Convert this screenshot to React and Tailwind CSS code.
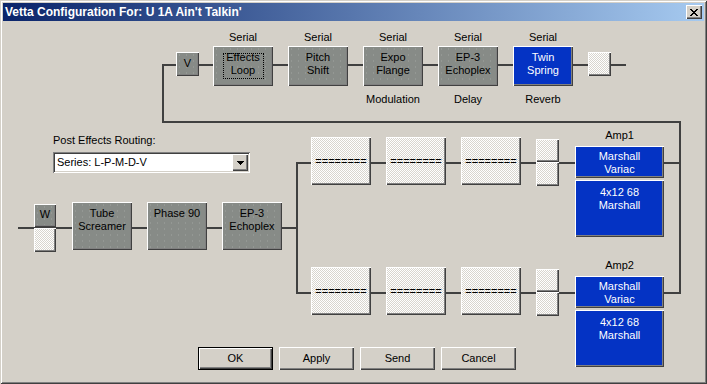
import React from "react";

const raised =
  "shadow-[inset_1px_1px_#ffffff,inset_-1px_-1px_#404040,inset_-2px_-2px_#808080]";
const btnRaised =
  "shadow-[inset_1px_1px_#ffffff,inset_-1px_-1px_#404040,inset_-2px_-2px_#808080,inset_2px_2px_#d4d0c8]";
const dots =
  "bg-[repeating-conic-gradient(#ffffff_0_25%,#d8d5ce_0_50%)] bg-[length:2px_2px]";

function Box({ pos, children, kind = "gray", focus = false }) {
  const color =
    kind === "blue"
      ? "bg-[#0433c4] text-white"
      : kind === "empty"
      ? `${dots} text-black justify-center`
      : "bg-[#878b87] bg-[radial-gradient(circle,#949894_0.6px,transparent_0.8px)] bg-[length:7px_6px] text-black";
  return (
    <div
      className={`absolute flex flex-col items-center text-center text-[11px] leading-[13px] ${raised} ${color} ${pos}`}
    >
      {children}
      {focus && (
        <div className="absolute left-[10px] top-[7px] w-[41px] h-[26px] border border-dotted border-black" />
      )}
    </div>
  );
}

function Wire({ pos }) {
  return <div className={`absolute bg-[#404040] ${pos}`} />;
}

function Label({ pos, children }) {
  return (
    <div className={`absolute text-[11px] leading-[13px] text-black text-center ${pos}`}>
      {children}
    </div>
  );
}

function Button({ children, def }) {
  return (
    <div
      className={`w-[75px] h-[23px] flex items-center justify-center text-[11px] text-black bg-[#d4d0c8] ${
        def
          ? "shadow-[inset_0_0_0_1px_#000000,inset_2px_2px_#ffffff,inset_-2px_-2px_#404040,inset_-3px_-3px_#808080]"
          : btnRaised
      }`}
    >
      {children}
    </div>
  );
}

export default function App() {
  return (
    <div className="w-[707px] h-[384px] bg-[#d4d0c8] font-['Liberation_Sans',Arial,sans-serif] p-[3px] flex flex-col shadow-[inset_1px_1px_#d4d0c8,inset_-1px_-1px_#404040,inset_2px_2px_#ffffff,inset_-2px_-2px_#808080]">
      {/* Title bar */}
      <div className="h-[18px] flex items-center justify-between pl-[2px] pr-[2px] bg-[linear-gradient(90deg,#0a246a,#a6caf0)]">
        <span className="text-white font-bold text-[12px] leading-[14px]">
          Vetta Configuration For: U 1A Ain't Talkin'
        </span>
        <div className={`w-[16px] h-[14px] bg-[#d4d0c8] flex items-center justify-center ${btnRaised}`}>
          <svg width="8" height="7" viewBox="0 0 8 7" shapeRendering="crispEdges">
            <path
              d="M0 0h2v1h-2zM6 0h2v1h-2zM1 1h2v1h-2zM5 1h2v1h-2zM2 2h4v1h-4zM3 3h2v1h-2zM2 4h4v1h-4zM1 5h2v1h-2zM5 5h2v1h-2zM0 6h2v1h-2zM6 6h2v1h-2z"
              fill="#000"
            />
          </svg>
        </div>
      </div>

      {/* Client area */}
      <div className="mt-[1px] flex-1 flex flex-col">
        <div className="relative h-[325px]">
          {/* Wires */}
          <Wire pos="left-[159px] top-[42px] w-[464px] h-[2px]" />
          <Wire pos="left-[159px] top-[42px] w-[2px] h-[59px]" />
          <Wire pos="left-[159px] top-[99px] w-[519px] h-[2px]" />
          <Wire pos="left-[676px] top-[99px] w-[2px] h-[173px]" />
          <Wire pos="left-[15px] top-[205px] w-[280px] h-[2px]" />
          <Wire pos="left-[293px] top-[140px] w-[2px] h-[132px]" />
          <Wire pos="left-[293px] top-[140px] w-[280px] h-[2px]" />
          <Wire pos="left-[293px] top-[270px] w-[280px] h-[2px]" />
          <Wire pos="left-[660px] top-[140px] w-[18px] h-[2px]" />
          <Wire pos="left-[660px] top-[270px] w-[18px] h-[2px]" />

          {/* Top row */}
          <Label pos="left-[210px] top-[9px] w-[60px]">Serial</Label>
          <Label pos="left-[285px] top-[9px] w-[60px]">Serial</Label>
          <Label pos="left-[360px] top-[9px] w-[60px]">Serial</Label>
          <Label pos="left-[435px] top-[9px] w-[60px]">Serial</Label>
          <Label pos="left-[510px] top-[9px] w-[60px]">Serial</Label>

          <Box pos="left-[173px] top-[30px] w-[23px] h-[24px] pt-[5px]">V</Box>
          <Box pos="left-[210px] top-[24px] w-[60px] h-[40px] pt-[5px]" focus>
            <span>Effects</span>
            <span>Loop</span>
          </Box>
          <Box pos="left-[285px] top-[24px] w-[60px] h-[40px] pt-[5px]">
            <span>Pitch</span>
            <span>Shift</span>
          </Box>
          <Box pos="left-[360px] top-[24px] w-[60px] h-[40px] pt-[5px]">
            <span>Expo</span>
            <span>Flange</span>
          </Box>
          <Box pos="left-[435px] top-[24px] w-[60px] h-[40px] pt-[5px]">
            <span>EP-3</span>
            <span>Echoplex</span>
          </Box>
          <Box kind="blue" pos="left-[510px] top-[24px] w-[60px] h-[40px] pt-[5px]">
            <span>Twin</span>
            <span>Spring</span>
          </Box>
          <Box kind="empty" pos="left-[585px] top-[30px] w-[23px] h-[24px]" />

          <Label pos="left-[350px] top-[71px] w-[80px]">Modulation</Label>
          <Label pos="left-[435px] top-[71px] w-[60px]">Delay</Label>
          <Label pos="left-[510px] top-[71px] w-[60px]">Reverb</Label>

          {/* Post effects routing */}
          <div className="absolute left-[50px] top-[112px] flex flex-col gap-[5px]">
            <span className="text-[11px] leading-[13px] text-black">Post Effects Routing:</span>
            <div className="w-[197px] h-[21px] bg-white flex items-center p-[2px] shadow-[inset_1px_1px_#808080,inset_-1px_-1px_#ffffff,inset_2px_2px_#404040,inset_-2px_-2px_#d4d0c8]">
              <span className="flex-1 pl-[2px] text-[11px] leading-[13px] text-black">
                Series: L-P-M-D-V
              </span>
              <div className={`w-[16px] h-[17px] bg-[#d4d0c8] flex items-center justify-center ${btnRaised}`}>
                <svg width="7" height="4" viewBox="0 0 7 4" shapeRendering="crispEdges">
                  <path d="M0 0h7v1h-7zM1 1h5v1h-5zM2 2h3v1h-3zM3 3h1v1h-1z" fill="#000" />
                </svg>
              </div>
            </div>
          </div>

          {/* Input row */}
          <Box pos="left-[31px] top-[182px] w-[22px] h-[23px] pt-[4px]">W</Box>
          <Box kind="empty" pos="left-[31px] top-[206px] w-[22px] h-[24px]" />
          <Box pos="left-[69px] top-[180px] w-[60px] h-[48px] pt-[5px]">
            <span>Tube</span>
            <span>Screamer</span>
          </Box>
          <Box pos="left-[144px] top-[180px] w-[60px] h-[48px] pt-[5px]">
            <span>Phase 90</span>
          </Box>
          <Box pos="left-[219px] top-[180px] w-[60px] h-[48px] pt-[5px]">
            <span>EP-3</span>
            <span>Echoplex</span>
          </Box>

          {/* Upper branch */}
          <Box kind="empty" pos="left-[308px] top-[115px] w-[60px] h-[48px]">========</Box>
          <Box kind="empty" pos="left-[383px] top-[115px] w-[60px] h-[48px]">========</Box>
          <Box kind="empty" pos="left-[458px] top-[115px] w-[60px] h-[48px]">========</Box>
          <Box kind="empty" pos="left-[533px] top-[117px] w-[23px] h-[23px]" />
          <Box kind="empty" pos="left-[533px] top-[140px] w-[23px] h-[24px]" />
          <Label pos="left-[572px] top-[107px] w-[89px]">Amp1</Label>
          <Box kind="blue" pos="left-[572px] top-[124px] w-[89px] h-[32px] pt-[4px]">
            <span>Marshall</span>
            <span>Variac</span>
          </Box>
          <Box kind="blue" pos="left-[572px] top-[158px] w-[89px] h-[57px] pt-[6px]">
            <span>4x12 68</span>
            <span>Marshall</span>
          </Box>

          {/* Lower branch */}
          <Box kind="empty" pos="left-[308px] top-[245px] w-[60px] h-[48px]">========</Box>
          <Box kind="empty" pos="left-[383px] top-[245px] w-[60px] h-[48px]">========</Box>
          <Box kind="empty" pos="left-[458px] top-[245px] w-[60px] h-[48px]">========</Box>
          <Box kind="empty" pos="left-[533px] top-[247px] w-[23px] h-[23px]" />
          <Box kind="empty" pos="left-[533px] top-[270px] w-[23px] h-[24px]" />
          <Label pos="left-[572px] top-[237px] w-[89px]">Amp2</Label>
          <Box kind="blue" pos="left-[572px] top-[254px] w-[89px] h-[32px] pt-[4px]">
            <span>Marshall</span>
            <span>Variac</span>
          </Box>
          <Box kind="blue" pos="left-[572px] top-[288px] w-[89px] h-[57px] pt-[6px]">
            <span>4x12 68</span>
            <span>Marshall</span>
          </Box>
        </div>

        {/* Buttons */}
        <div className="flex gap-[6px] pl-[195px]">
          <Button def>OK</Button>
          <Button>Apply</Button>
          <Button>Send</Button>
          <Button>Cancel</Button>
        </div>
      </div>
    </div>
  );
}
